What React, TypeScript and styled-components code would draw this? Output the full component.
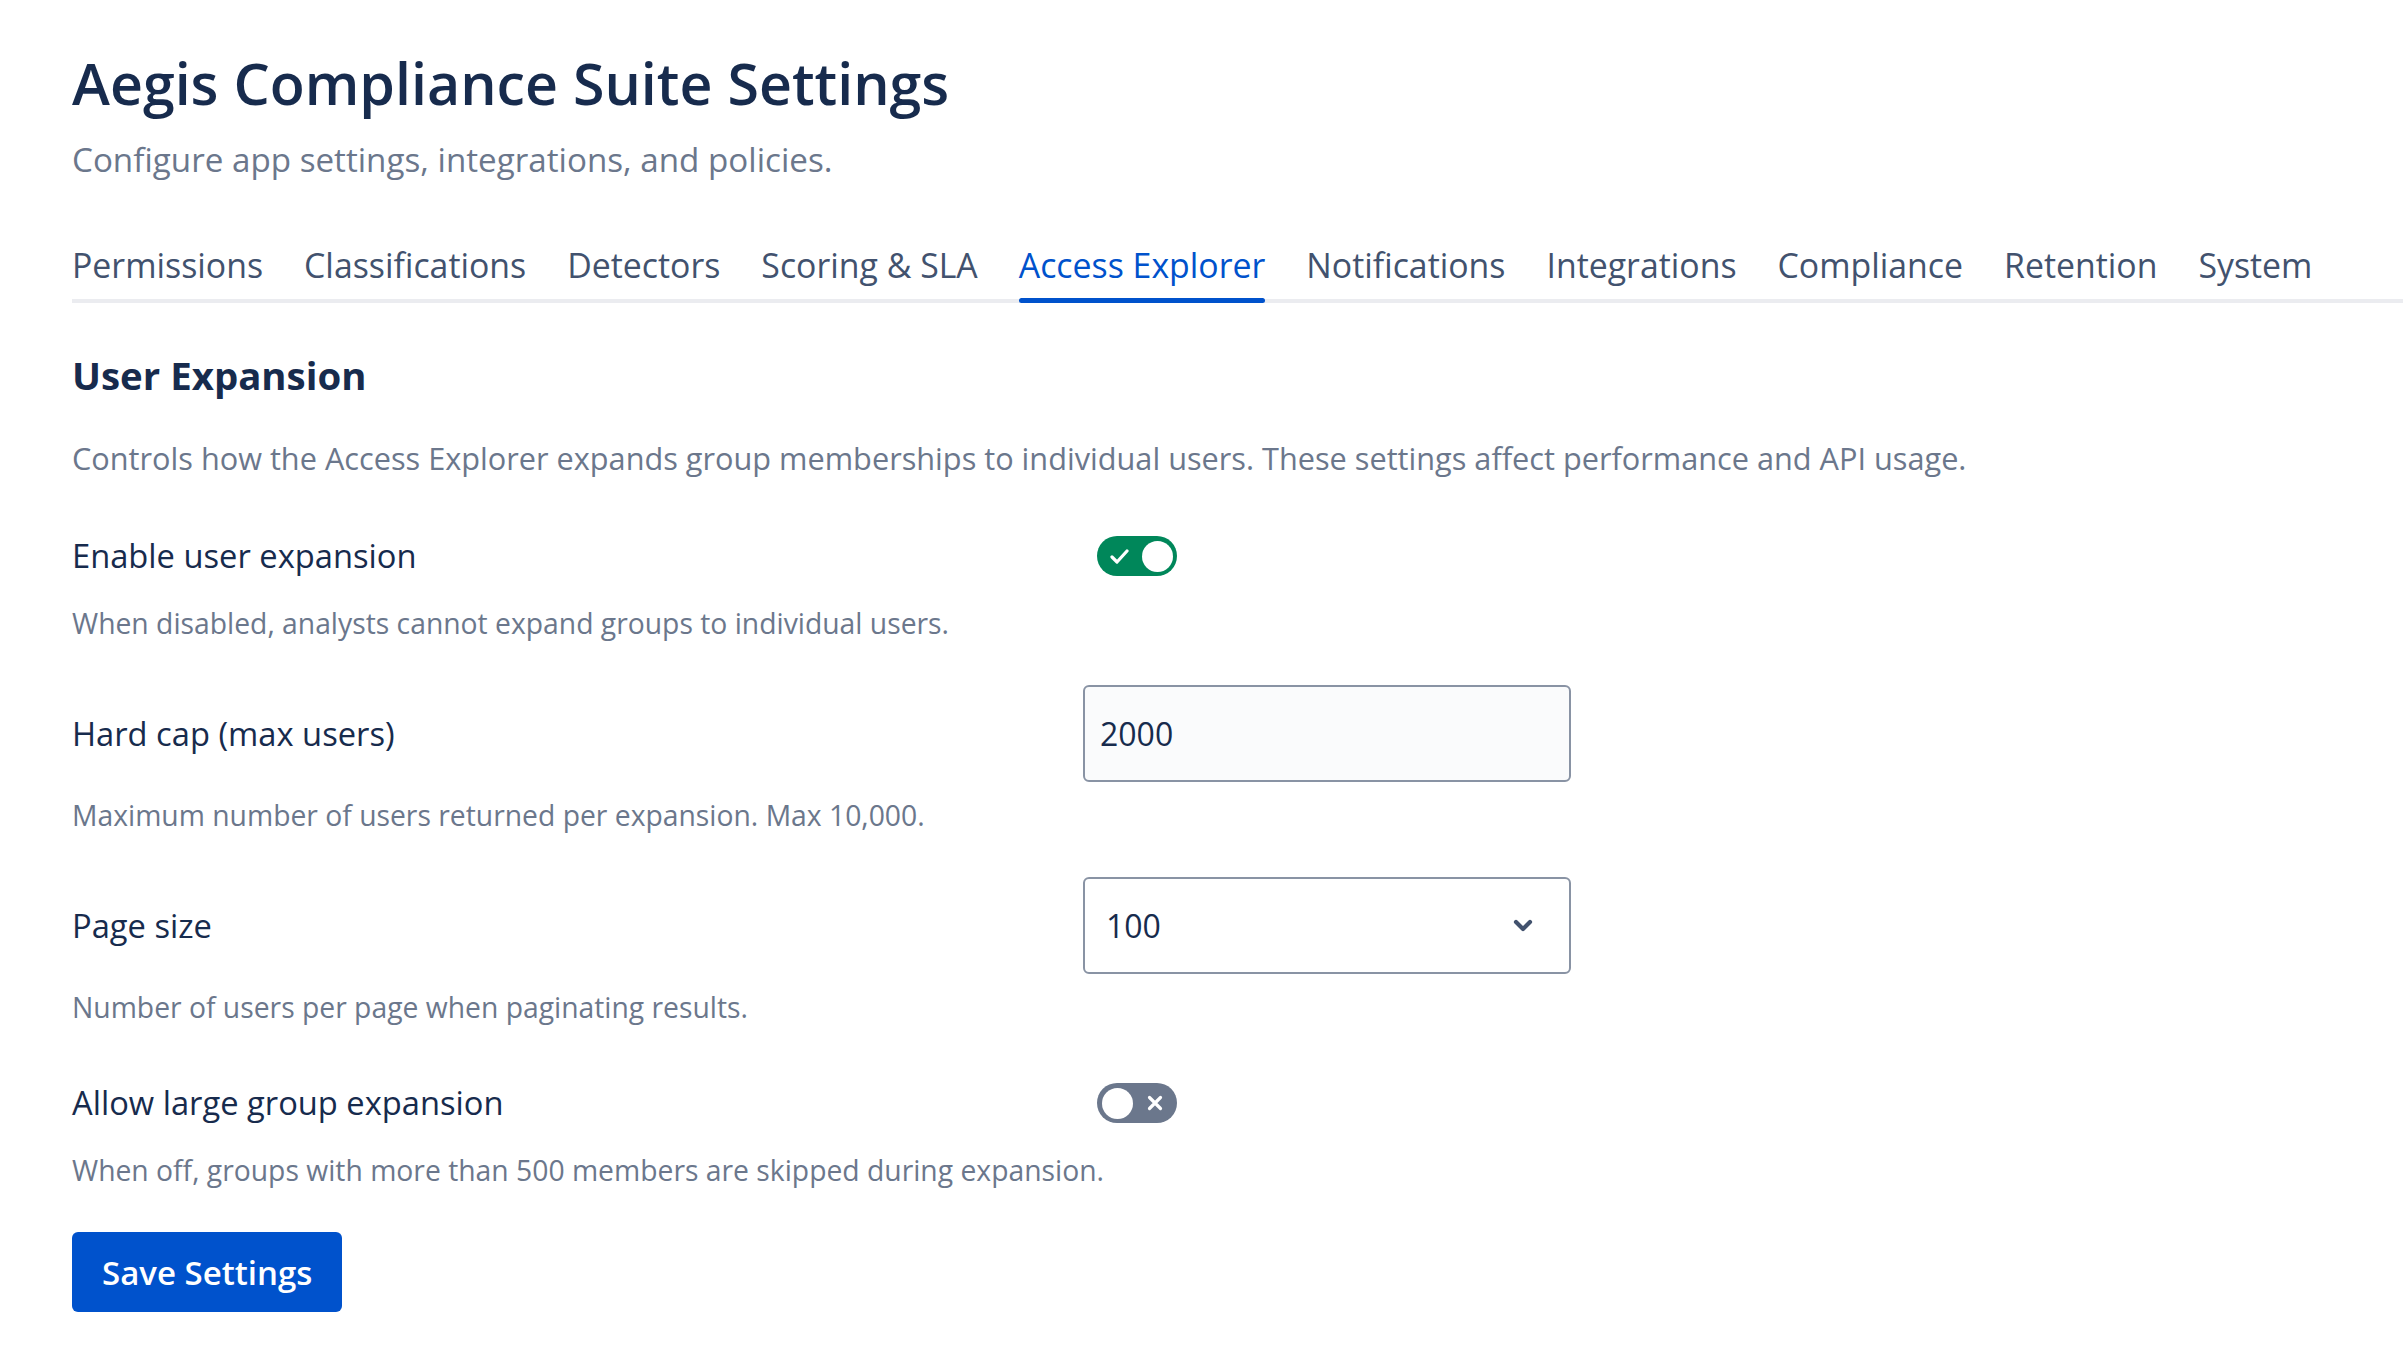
import { createGlobalStyle, styled } from "styled-components";

const GlobalStyle = createGlobalStyle`
  body {
    margin: 0;
    background: #ffffff;
    font-family: "Open Sans", "Noto Sans", sans-serif;
    color: #172b4d;
  }
`;

const Page = styled.div`
  padding: 49px 0 60px 72px;
`;

const Title = styled.h1`
  margin: 0;
  font-size: 57.3px;
  font-weight: 600;
  line-height: 68px;
  color: #172b4d;
`;

const Subtitle = styled.p`
  margin: 21px 0 0;
  font-size: 33.2px;
  line-height: 44px;
  color: #6b778c;
`;

const TabList = styled.nav`
  display: flex;
  gap: 41px;
  margin-top: 61px;
  border-bottom: 4px solid #ebecf0;
`;

const Tab = styled.div<{ $active?: boolean }>`
  position: relative;
  font-size: 33.85px;
  font-weight: 500;
  line-height: 44px;
  padding-bottom: 12px;
  white-space: nowrap;
  cursor: pointer;
  color: ${(p) => (p.$active ? "#0052cc" : "#42526e")};

  &::after {
    content: "";
    display: ${(p) => (p.$active ? "block" : "none")};
    position: absolute;
    left: 0;
    right: 0;
    bottom: -4px;
    height: 5px;
    border-radius: 3px;
    background: #0052cc;
  }
`;

const SectionTitle = styled.h2`
  margin: 46px 0 0;
  font-size: 38.4px;
  font-weight: 700;
  line-height: 52px;
  color: #172b4d;
`;

const Description = styled.p`
  margin: 35px 0 0;
  font-size: 30.7px;
  line-height: 44px;
  color: #6b778c;
`;

const Field = styled.div`
  margin-top: 42px;
`;

const Row = styled.div`
  display: grid;
  grid-template-columns: 1011px 488px;
  align-items: center;
  min-height: 68px;
`;

const Label = styled.label`
  font-size: 32.7px;
  line-height: 44px;
  color: #172b4d;
`;

const Help = styled.div`
  margin-top: 13px;
  font-size: 28.3px;
  line-height: 40px;
  color: #6b778c;
`;

const TextInput = styled.input`
  box-sizing: border-box;
  width: 488px;
  height: 97px;
  padding: 0 15px;
  border: 2px solid #8993a4;
  border-radius: 6px;
  background: #fafbfc;
  font-family: inherit;
  font-size: 32px;
  color: #172b4d;
  outline: none;
`;

const SelectBox = styled.div`
  box-sizing: border-box;
  display: flex;
  align-items: center;
  justify-content: space-between;
  width: 488px;
  height: 97px;
  padding: 0 36px 0 21px;
  border: 2px solid #8993a4;
  border-radius: 6px;
  background: #ffffff;
  font-size: 32px;
  color: #172b4d;
  cursor: pointer;
`;

const Track = styled.span<{ $on: boolean }>`
  box-sizing: border-box;
  display: flex;
  flex-direction: ${(p) => (p.$on ? "row" : "row-reverse")};
  align-items: center;
  justify-content: space-between;
  width: 80px;
  height: 40px;
  margin-left: 14px;
  padding: 0 4.5px;
  border-radius: 20px;
  background: ${(p) => (p.$on ? "#00875a" : "#6b778c")};
  cursor: pointer;
`;

const IconSlot = styled.span`
  display: flex;
  align-items: center;
  justify-content: center;
  width: 36px;
  height: 31px;
`;

const Knob = styled.span`
  width: 31px;
  height: 31px;
  border-radius: 50%;
  background: #ffffff;
`;

const SaveButton = styled.button`
  margin-top: 42px;
  height: 80px;
  padding: 0 30px;
  border: none;
  border-radius: 6px;
  background: #0052cc;
  color: #ffffff;
  font-family: inherit;
  font-size: 33px;
  font-weight: 600;
  cursor: pointer;
`;

const tabs = [
  "Permissions",
  "Classifications",
  "Detectors",
  "Scoring & SLA",
  "Access Explorer",
  "Notifications",
  "Integrations",
  "Compliance",
  "Retention",
  "System",
];

function Toggle({ on }: { on: boolean }) {
  return (
    <Track $on={on}>
      <IconSlot>
        {on ? (
          <svg width="19" height="15" viewBox="0 0 19 15">
            <path
              d="M2 8 L7 13 L17 2"
              fill="none"
              stroke="#ffffff"
              strokeWidth="3.2"
              strokeLinecap="round"
              strokeLinejoin="round"
            />
          </svg>
        ) : (
          <svg width="16" height="16" viewBox="0 0 16 16">
            <path
              d="M2.5 2.5 L13.5 13.5 M13.5 2.5 L2.5 13.5"
              fill="none"
              stroke="#ffffff"
              strokeWidth="3.2"
              strokeLinecap="round"
            />
          </svg>
        )}
      </IconSlot>
      <Knob />
    </Track>
  );
}

export default function App() {
  return (
    <>
      <GlobalStyle />
      <Page>
        <Title>Aegis Compliance Suite Settings</Title>
        <Subtitle>Configure app settings, integrations, and policies.</Subtitle>

        <TabList>
          {tabs.map((t) => (
            <Tab key={t} $active={t === "Access Explorer"}>
              {t}
            </Tab>
          ))}
        </TabList>

        <SectionTitle>User Expansion</SectionTitle>
        <Description>
          Controls how the Access Explorer expands group memberships to
          individual users. These settings affect performance and API usage.
        </Description>

        <Field>
          <Row>
            <Label>Enable user expansion</Label>
            <Toggle on />
          </Row>
          <Help>When disabled, analysts cannot expand groups to individual users.</Help>
        </Field>

        <Field>
          <Row>
            <Label>Hard cap (max users)</Label>
            <TextInput defaultValue="2000" />
          </Row>
          <Help>Maximum number of users returned per expansion. Max 10,000.</Help>
        </Field>

        <Field>
          <Row>
            <Label>Page size</Label>
            <SelectBox>
              <span>100</span>
              <svg width="20" height="13" viewBox="0 0 20 13">
                <path
                  d="M3 3 L10 10 L17 3"
                  fill="none"
                  stroke="#42526e"
                  strokeWidth="4.2"
                  strokeLinecap="round"
                  strokeLinejoin="round"
                />
              </svg>
            </SelectBox>
          </Row>
          <Help>Number of users per page when paginating results.</Help>
        </Field>

        <Field>
          <Row>
            <Label>Allow large group expansion</Label>
            <Toggle on={false} />
          </Row>
          <Help>When off, groups with more than 500 members are skipped during expansion.</Help>
        </Field>

        <SaveButton>Save Settings</SaveButton>
      </Page>
    </>
  );
}
